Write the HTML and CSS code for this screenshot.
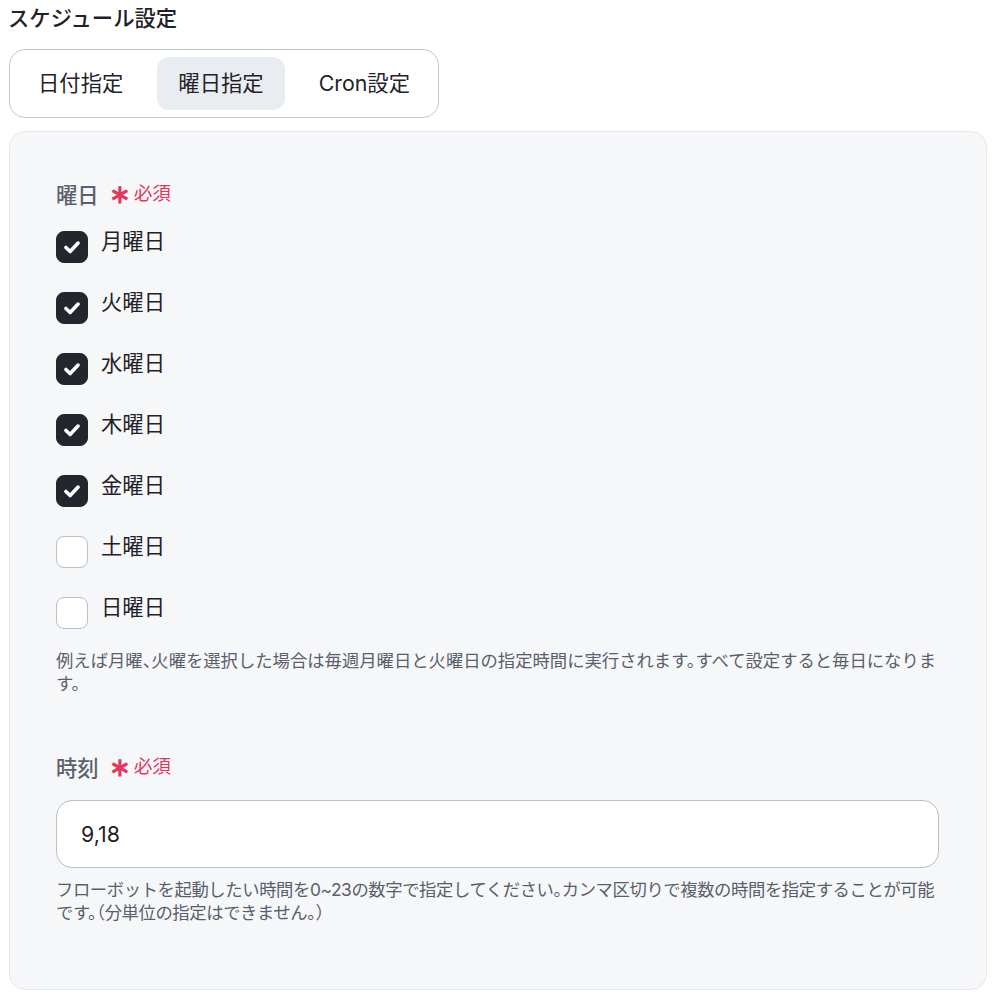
FILE: index.html
```html
<!DOCTYPE html>
<html lang="ja">
<head>
<meta charset="utf-8">
<title>スケジュール設定</title>
<link rel="stylesheet" href="styles.css">
</head>
<body>
<h2 class="title">スケジュール設定</h2>
<div class="segmented">
  <button class="seg">日付指定</button>
  <button class="seg seg-active">曜日指定</button>
  <button class="seg">Cron設定</button>
</div>
<div class="panel">
  <div class="field">
    <div class="label">曜日<span class="req"><span class="ast">∗</span>必須</span></div>
    <div class="checks">
      <label class="check"><span class="box on"><svg viewBox="0 0 32 32"><path d="M9.5 16.5l4.5 4.3 8.5-9" fill="none" stroke="#fff" stroke-width="3.8" stroke-linecap="round" stroke-linejoin="round"/></svg></span><span class="ctext">月曜日</span></label>
      <label class="check"><span class="box on"><svg viewBox="0 0 32 32"><path d="M9.5 16.5l4.5 4.3 8.5-9" fill="none" stroke="#fff" stroke-width="3.8" stroke-linecap="round" stroke-linejoin="round"/></svg></span><span class="ctext">火曜日</span></label>
      <label class="check"><span class="box on"><svg viewBox="0 0 32 32"><path d="M9.5 16.5l4.5 4.3 8.5-9" fill="none" stroke="#fff" stroke-width="3.8" stroke-linecap="round" stroke-linejoin="round"/></svg></span><span class="ctext">水曜日</span></label>
      <label class="check"><span class="box on"><svg viewBox="0 0 32 32"><path d="M9.5 16.5l4.5 4.3 8.5-9" fill="none" stroke="#fff" stroke-width="3.8" stroke-linecap="round" stroke-linejoin="round"/></svg></span><span class="ctext">木曜日</span></label>
      <label class="check"><span class="box on"><svg viewBox="0 0 32 32"><path d="M9.5 16.5l4.5 4.3 8.5-9" fill="none" stroke="#fff" stroke-width="3.8" stroke-linecap="round" stroke-linejoin="round"/></svg></span><span class="ctext">金曜日</span></label>
      <label class="check"><span class="box"></span><span class="ctext">土曜日</span></label>
      <label class="check"><span class="box"></span><span class="ctext">日曜日</span></label>
    </div>
    <p class="help">例えば月曜、火曜を選択した場合は毎週月曜日と火曜日の指定時間に実行されます。すべて設定すると毎日になります。</p>
  </div>
  <div class="field field-time">
    <div class="label">時刻<span class="req"><span class="ast">∗</span>必須</span></div>
    <div class="input">9,18</div>
    <p class="help help-tight">フローボットを起動したい時間を0~23の数字で指定してください。カンマ区切りで複数の時間を指定することが可能です。（分単位の指定はできません。）</p>
  </div>
</div>
</body>
</html>
```

FILE: styles.css
```css
html, body {
  background: #ffffff;
}
body {
  margin: 8px;
  font-family: Inter, "Noto Sans CJK JP", "Noto Sans", sans-serif;
  color: #1f2328;
}
.title {
  margin: 0;
  font-size: 21.33px;
  font-weight: 500;
  line-height: 28px;
  margin-top: -4px;
}
.segmented {
  display: inline-flex;
  margin-top: 17px;
  margin-left: 1px;
  padding: 7px;
  border: 1px solid #c3c8cf;
  border-radius: 16px;
  gap: 13px;
}
.seg {
  font-family: inherit;
  font-size: 21.33px;
  color: #1f2328;
  background: transparent;
  border: 0;
  border-radius: 12px;
  height: 53px;
  padding: 0 21px;
  line-height: 53px;
}
.seg-active {
  background: #e9ecf0;
}
.panel {
  margin-top: 13px;
  margin-left: 1px;
  background: #f6f7f9;
  border: 1px solid #e4e7eb;
  border-radius: 16px;
  padding: 47px 47px 48px 46px;
}
.label {
  font-size: 21.33px;
  font-weight: 500;
  color: #5a616c;
  line-height: 32px;
  display: flex;
  align-items: center;
}
.req {
  color: #e5365e;
  font-size: 18.67px;
  font-weight: 400;
  margin-left: 10px;
  display: inline-flex;
  align-items: center;
  position: relative;
  top: -1px;
}
.ast {
  font-size: 26px;
  font-weight: 700;
  margin-right: 3px;
  line-height: 1;
}
.checks {
  display: flex;
  flex-direction: column;
  gap: 29px;
  margin-top: 20px;
}
.check {
  display: flex;
  align-items: flex-start;
  gap: 13px;
}
.box {
  width: 32px;
  height: 32px;
  box-sizing: border-box;
  border-radius: 8px;
  border: 1px solid #b8bfc8;
  background: #ffffff;
  flex: none;
  display: block;
}
.box svg {
  display: block;
  width: 30px;
  height: 30px;
}
.box.on {
  background: #22272e;
  border-color: #22272e;
}
.ctext {
  font-size: 21.33px;
  line-height: 24px;
  color: #1f2328;
  margin-top: -2px;
}
.help {
  margin: 20px 0 0;
  font-size: 17.33px;
  line-height: 23px;
  color: #59606b;
  font-feature-settings: "halt";
}
.help-tight {
  letter-spacing: -0.4px;
}
.field-time {
  margin-top: 57px;
}
.input {
  margin-top: 16px;
  height: 68px;
  box-sizing: border-box;
  border: 1px solid #b8bfc8;
  border-radius: 16px;
  background: #ffffff;
  padding: 0 24px;
  font-size: 21.33px;
  line-height: 66px;
  color: #1f2328;
}
.field-time .help {
  margin-top: 10px;
  margin-bottom: 17px;
}
```
